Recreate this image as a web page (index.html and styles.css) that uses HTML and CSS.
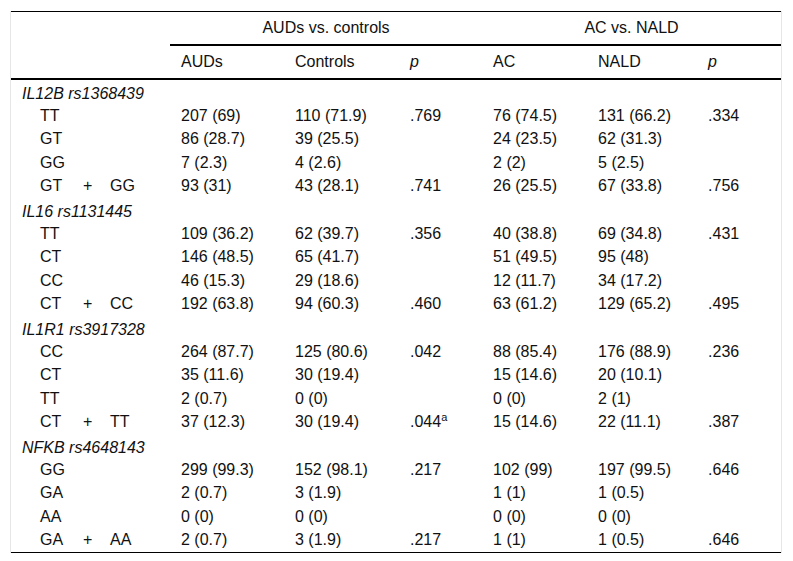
FILE: index.html
```html
<!DOCTYPE html>
<html lang="en">
<head>
<meta charset="utf-8">
<title>Genotype table</title>
<link rel="stylesheet" href="styles.css">
</head>
<body>
<div class="frame">
<table class="tbl">
<colgroup>
<col class="c-label"><col class="c-auds"><col class="c-ctrl"><col class="c-p1"><col class="c-ac"><col class="c-nald"><col class="c-p2">
</colgroup>
<thead>
<tr class="group-row">
<th></th>
<th colspan="3" class="group">AUDs vs. controls</th>
<th colspan="3" class="group">AC vs. NALD</th>
</tr>
<tr class="head-row">
<th></th>
<th>AUDs</th><th>Controls</th><th><i>p</i></th>
<th>AC</th><th>NALD</th><th><i>p</i></th>
</tr>
</thead>
<tbody>
<tr><td class="gene" colspan="7">IL12B rs1368439</td></tr>
<tr><td class="geno">TT</td><td>207 (69)</td><td>110 (71.9)</td><td>.769</td><td>76 (74.5)</td><td>131 (66.2)</td><td>.334</td></tr>
<tr><td class="geno">GT</td><td>86 (28.7)</td><td>39 (25.5)</td><td></td><td>24 (23.5)</td><td>62 (31.3)</td><td></td></tr>
<tr><td class="geno">GG</td><td>7 (2.3)</td><td>4 (2.6)</td><td></td><td>2 (2)</td><td>5 (2.5)</td><td></td></tr>
<tr><td class="geno"><span class="g1">GT</span><span class="plus">+</span><span>GG</span></td><td>93 (31)</td><td>43 (28.1)</td><td>.741</td><td>26 (25.5)</td><td>67 (33.8)</td><td>.756</td></tr>

<tr><td class="gene" colspan="7">IL16 rs1131445</td></tr>
<tr><td class="geno">TT</td><td>109 (36.2)</td><td>62 (39.7)</td><td>.356</td><td>40 (38.8)</td><td>69 (34.8)</td><td>.431</td></tr>
<tr><td class="geno">CT</td><td>146 (48.5)</td><td>65 (41.7)</td><td></td><td>51 (49.5)</td><td>95 (48)</td><td></td></tr>
<tr><td class="geno">CC</td><td>46 (15.3)</td><td>29 (18.6)</td><td></td><td>12 (11.7)</td><td>34 (17.2)</td><td></td></tr>
<tr><td class="geno"><span class="g1">CT</span><span class="plus">+</span><span>CC</span></td><td>192 (63.8)</td><td>94 (60.3)</td><td>.460</td><td>63 (61.2)</td><td>129 (65.2)</td><td>.495</td></tr>

<tr><td class="gene" colspan="7">IL1R1 rs3917328</td></tr>
<tr><td class="geno">CC</td><td>264 (87.7)</td><td>125 (80.6)</td><td>.042</td><td>88 (85.4)</td><td>176 (88.9)</td><td>.236</td></tr>
<tr><td class="geno">CT</td><td>35 (11.6)</td><td>30 (19.4)</td><td></td><td>15 (14.6)</td><td>20 (10.1)</td><td></td></tr>
<tr><td class="geno">TT</td><td>2 (0.7)</td><td>0 (0)</td><td></td><td>0 (0)</td><td>2 (1)</td><td></td></tr>
<tr><td class="geno"><span class="g1">CT</span><span class="plus">+</span><span>TT</span></td><td>37 (12.3)</td><td>30 (19.4)</td><td>.044<sup>a</sup></td><td>15 (14.6)</td><td>22 (11.1)</td><td>.387</td></tr>

<tr><td class="gene" colspan="7">NFKB rs4648143</td></tr>
<tr><td class="geno">GG</td><td>299 (99.3)</td><td>152 (98.1)</td><td>.217</td><td>102 (99)</td><td>197 (99.5)</td><td>.646</td></tr>
<tr><td class="geno">GA</td><td>2 (0.7)</td><td>3 (1.9)</td><td></td><td>1 (1)</td><td>1 (0.5)</td><td></td></tr>
<tr><td class="geno">AA</td><td>0 (0)</td><td>0 (0)</td><td></td><td>0 (0)</td><td>0 (0)</td><td></td></tr>
<tr><td class="geno"><span class="g1">GA</span><span class="plus">+</span><span>AA</span></td><td>2 (0.7)</td><td>3 (1.9)</td><td>.217</td><td>1 (1)</td><td>1 (0.5)</td><td>.646</td></tr>
</tbody>
</table>
</div>
</body>
</html>
```

FILE: styles.css
```css
html, body {
  margin: 0;
  padding: 0;
  background: #fff;
}
body {
  padding: 11px 0 0 10px;
  font-family: "Liberation Sans", Arial, sans-serif;
  font-size: 16px;
  color: #111;
}
.frame {
  width: 770px;
  border-left: 1px solid #e6e6e6;
  border-right: 1px solid #e6e6e6;
}
.tbl {
  width: 770px;
  border-collapse: collapse;
  table-layout: fixed;
  border-top: 1px solid #000;
  border-bottom: 1px solid #000;
  font-size: 16px;
}
.c-label { width: 159px; }
.c-auds { width: 114px; }
.c-ctrl { width: 115px; }
.c-p1 { width: 83px; }
.c-ac { width: 105px; }
.c-nald { width: 110px; }
.c-p2 { width: 84px; }

.tbl th {
  font-weight: normal;
  text-align: left;
  line-height: 20px;
  padding: 6px 11px 6px;
  vertical-align: middle;
}
.tbl th.group {
  text-align: center;
  border-bottom: 2px solid #000;
}
.group-row th { height: 20px; }
.head-row th {
  border-bottom: 2px solid #000;
}
.tbl td {
  padding: 1px 11px 3px;
  line-height: 19.2px;
  text-align: left;
  white-space: nowrap;
}
.tbl td.gene {
  font-style: italic;
  padding-top: 4px;
  padding-bottom: 2px;
}
.tbl td.geno {
  padding-left: 29px;
}
.g1 {
  display: inline-block;
  width: 43px;
}
.plus {
  display: inline-block;
  width: 27px;
}
sup {
  font-size: 11px;
  line-height: 0;
  vertical-align: 6px;
}
```
